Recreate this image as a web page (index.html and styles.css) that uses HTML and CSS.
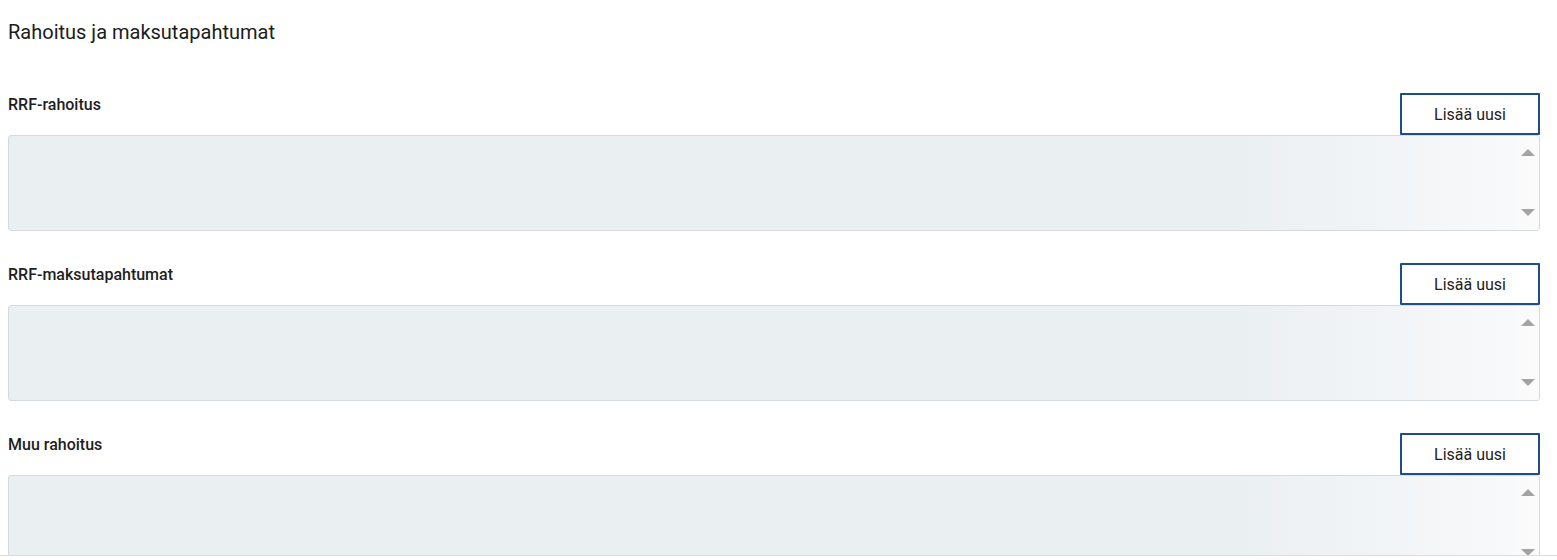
FILE: index.html
```html
<!DOCTYPE html>
<html lang="fi">
<head>
  <meta charset="UTF-8">
  <meta name="viewport" content="width=device-width, initial-scale=1.0">
  <title>Rahoitus ja maksutapahtumat</title>
  <link rel="stylesheet" href="styles.css">
</head>
<body>
  <div class="page">
    <h2 class="page-title">Rahoitus ja maksutapahtumat</h2>

    <div class="funding-section">
      <div class="section-head">
        <span class="section-label">RRF-rahoitus</span>
        <button class="add-button" type="button">Lisää uusi</button>
      </div>
      <div class="list-box">
        <div class="list-scroll">
          <span class="arrow arrow-up"></span>
          <span class="arrow arrow-down"></span>
        </div>
      </div>
    </div>

    <div class="funding-section">
      <div class="section-head">
        <span class="section-label">RRF-maksutapahtumat</span>
        <button class="add-button" type="button">Lisää uusi</button>
      </div>
      <div class="list-box">
        <div class="list-scroll">
          <span class="arrow arrow-up"></span>
          <span class="arrow arrow-down"></span>
        </div>
      </div>
    </div>

    <div class="funding-section">
      <div class="section-head">
        <span class="section-label">Muu rahoitus</span>
        <button class="add-button" type="button">Lisää uusi</button>
      </div>
      <div class="list-box">
        <div class="list-scroll">
          <span class="arrow arrow-up"></span>
          <span class="arrow arrow-down"></span>
        </div>
      </div>
    </div>
  </div>
</body>
</html>
```

FILE: styles.css
```css
body {
  margin: 0;
  background-color: #ffffff;
  color: #222222;
  font-family: Roboto, "Liberation Sans", sans-serif;
}

.page {
  height: 555px;
  overflow: hidden;
  padding: 0 17px 0 8px;
  border-bottom: 1px solid #d9dde0;
}

.page-title {
  margin: 20px 0 49px;
  font-size: 20px;
  line-height: 24px;
  font-weight: 400;
  color: #1c1c1c;
}

.funding-section {
  margin-bottom: 32px;
}

.section-head {
  display: flex;
  justify-content: space-between;
  align-items: flex-start;
}

.section-label {
  margin-top: 3px;
  font-size: 16px;
  line-height: 18px;
  font-weight: 500;
  color: #1e1e1e;
}

.add-button {
  width: 140px;
  height: 42px;
  background-color: #ffffff;
  border: 2px solid #1f4e86;
  border-radius: 1px;
  font-family: Roboto, "Liberation Sans", sans-serif;
  font-size: 16px;
  color: #222222;
  cursor: pointer;
}

.list-box {
  display: flex;
  justify-content: flex-end;
  height: 94px;
  border: 1px solid #d4dadf;
  border-radius: 3px;
  background: linear-gradient(to right, #eaeff2 0%, #eaeff2 80%, #f9fafb 100%);
}

.list-scroll {
  width: 22px;
  display: flex;
  flex-direction: column;
  justify-content: space-between;
  align-items: center;
  padding: 13px 0 14px;
  background-color: rgba(255, 255, 255, 0.25);
}

.arrow {
  width: 0;
  height: 0;
  border-left: 7px solid transparent;
  border-right: 7px solid transparent;
}

.arrow-up {
  border-bottom: 7px solid #a3a3a3;
}

.arrow-down {
  border-top: 7px solid #a3a3a3;
}
```
